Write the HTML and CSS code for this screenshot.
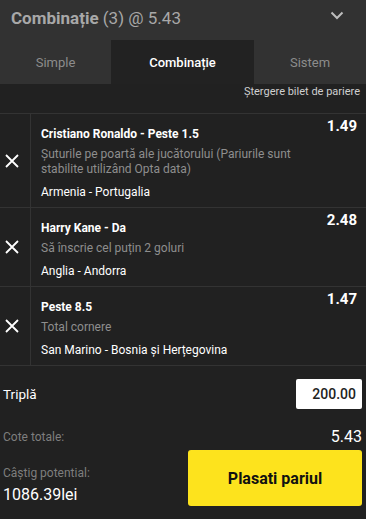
FILE: index.html
```html
<!DOCTYPE html>
<html lang="ro">
<head>
<meta charset="utf-8">
<link rel="stylesheet" href="styles.css">
</head>
<body>
<div class="slip">
  <div class="header">
    <div class="title"><b>Combinație</b> (3) @ 5.43</div>
    <svg class="chev" width="14" height="9" viewBox="0 0 14 9"><path d="M1.5 1.5 L7 7 L12.5 1.5" fill="none" stroke="#bdbdbd" stroke-width="2"/></svg>
  </div>
  <div class="tabs">
    <div class="tab">Simple</div>
    <div class="tab active">Combinație</div>
    <div class="tab">Sistem</div>
  </div>
  <div class="clear-row"><span class="clear">Ştergere bilet de pariere</span></div>
  <div class="bets">
    <div class="bet">
      <div class="rm"><svg width="14" height="14" viewBox="0 0 14 14"><path d="M1 1 L13 13 M13 1 L1 13" stroke="#fff" stroke-width="1.8"/></svg></div>
      <div class="info">
        <div class="top"><span class="sel">Cristiano Ronaldo - Peste 1.5</span><span class="odd">1.49</span></div>
        <div class="market">Şuturile pe poartă ale jucătorului (Pariurile sunt stabilite utilizând Opta data)</div>
        <div class="match">Armenia - Portugalia</div>
      </div>
    </div>
    <div class="bet">
      <div class="rm"><svg width="14" height="14" viewBox="0 0 14 14"><path d="M1 1 L13 13 M13 1 L1 13" stroke="#fff" stroke-width="1.8"/></svg></div>
      <div class="info">
        <div class="top"><span class="sel">Harry Kane - Da</span><span class="odd">2.48</span></div>
        <div class="market">Să înscrie cel puțin 2 goluri</div>
        <div class="match">Anglia - Andorra</div>
      </div>
    </div>
    <div class="bet">
      <div class="rm"><svg width="14" height="14" viewBox="0 0 14 14"><path d="M1 1 L13 13 M13 1 L1 13" stroke="#fff" stroke-width="1.8"/></svg></div>
      <div class="info">
        <div class="top"><span class="sel">Peste 8.5</span><span class="odd">1.47</span></div>
        <div class="market">Total cornere</div>
        <div class="match">San Marino - Bosnia și Herțegovina</div>
      </div>
    </div>
  </div>
  <div class="stake-row">
    <span class="stake-label">Triplă</span>
    <div class="stake-input">200.00</div>
  </div>
  <div class="total-row">
    <span class="muted">Cote totale:</span>
    <span class="total">5.43</span>
  </div>
  <div class="win-row">
    <div class="win">
      <div class="muted">Câştig potential:</div>
      <div class="amount">1086.39lei</div>
    </div>
    <button class="place">Plasati pariul</button>
  </div>
</div>
</body>
</html>
```

FILE: styles.css
```css
* { box-sizing: border-box; }
html, body { margin: 0; padding: 0; background: #212121; }
body { font-family: Roboto, "Liberation Sans", Arial, sans-serif; width: 366px; height: 519px; overflow: hidden; }
.slip { background: #212121; color: #fff; }
.header {
  height: 40px; background: #323232; display: flex; align-items: center;
  justify-content: space-between; padding: 0 22px 4px 11px;
}
.title { color: #a8a8a8; font-size: 17px; }
.title b { font-weight: 700; }
.chev { margin-top: -6px; }
.tabs { display: flex; height: 44px; background: #323232; }
.tab {
  flex: 0 0 111px; display: flex; align-items: center; justify-content: center;
  color: #8c8c8c; font-size: 13px;
}
.tab.active { flex: 0 0 143px; background: #222; color: #fff; font-weight: 500; }
.tab:last-child { flex: 1; }
.clear-row { display: flex; justify-content: flex-end; padding: 1px 6px 0; height: 29px; }
.clear { font-size: 11px; color: #cfcfcf; }
.bets { border-top: 1px solid #333; }
.bet { display: flex; border-bottom: 1px solid #333; }
.rm {
  width: 31px; flex: 0 0 31px; border-right: 1px solid #333;
  display: flex; align-items: center; justify-content: center; padding-right: 7px;
}
.info { flex: 1; padding: 13px 9px 7px 10px; }
.top { display: flex; justify-content: space-between; align-items: flex-start; height: 15px; }
.sel { font-size: 12px; font-weight: 700; line-height: 15px; }
.odd { font-size: 15px; font-weight: 700; line-height: 15px; margin-top: -8px; }
.market { font-size: 12px; color: #8e8e8e; line-height: 15px; margin-top: 5px; padding-right: 42px; }
.match { font-size: 12px; color: #fff; margin-top: 8px; line-height: 15px; }
.stake-row {
  display: flex; justify-content: space-between; align-items: center;
  padding: 13px 4px 0 3px;
}
.stake-label { font-size: 13.5px; color: #fff; }
.stake-input {
  width: 66px; height: 30px; background: #fff; color: #222; border-radius: 2px;
  font-size: 14px; font-weight: 500; display: flex; align-items: center; justify-content: flex-end; padding-right: 6px;
}
.total-row {
  display: flex; justify-content: space-between; align-items: center;
  padding: 18px 4px 0 3px;
}
.muted { font-size: 12px; color: #7e7e7e; }
.total { font-size: 16px; color: #fff; }
.win-row { display: flex; justify-content: space-between; align-items: flex-start; padding: 4px 4px 0 3px; }
.win { padding-top: 16px; }
.amount { font-size: 16px; color: #fff; margin-top: 5px; }
.place {
  width: 174px; height: 56px; background: #fde31d; border: 0; border-radius: 3px;
  font-family: Roboto, "Liberation Sans", Arial, sans-serif; font-size: 16px; font-weight: 700; color: #111;
}
```
